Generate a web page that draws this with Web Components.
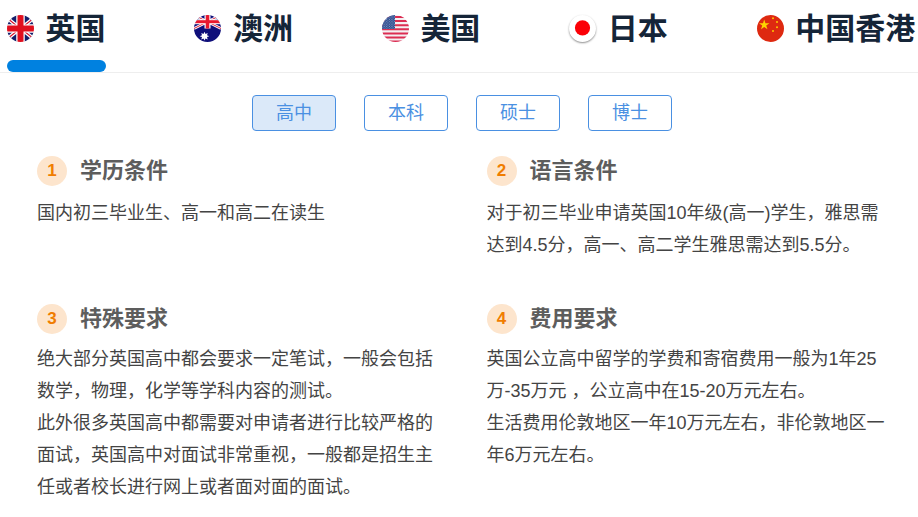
<!DOCTYPE html>
<html lang="zh"><head><meta charset="utf-8"><style>
html,body{margin:0;padding:0;background:#fff;font-family:"Liberation Sans","Noto Sans CJK SC",sans-serif}
body{width:918px;height:517px;overflow:hidden}
</style></head><body>
<study-page></study-page>
<template id="flag-uk"><svg viewBox="0 0 27 27" width="27" height="27"><defs><clipPath id="c"><circle cx="13.5" cy="13.5" r="13.5"/></clipPath></defs><g clip-path="url(#c)"><rect width="27" height="27" fill="#fff"/><path d="M0 0H9.5V9.5H0ZM17.5 0H27V9.5H17.5ZM0 17.5H9.5V27H0ZM17.5 17.5H27V27H17.5Z" fill="#15206b"/><path d="M0 3L10 11M27 3L17 11M0 24L10 16M27 24L17 16" stroke="#fff" stroke-width="3.6"/><path d="M1 3.8L10 11M26 3.8L17 11M1 23.2L10 16M26 23.2L17 16" stroke="#d8142c" stroke-width="1.1"/><rect x="9.5" width="8" height="27" fill="#fff"/><rect y="9.5" width="27" height="8" fill="#fff"/><rect x="10.5" width="6" height="27" fill="#e00f1e"/><rect y="10.5" width="27" height="6" fill="#e00f1e"/></g></svg></template>
<template id="flag-au"><svg viewBox="0 0 27 27" width="27" height="27"><defs><clipPath id="c"><circle cx="13.5" cy="13.5" r="13.5"/></clipPath></defs><g clip-path="url(#c)"><rect width="27" height="27" fill="#0f0f7a"/><path d="M0 0L27 13.5M27 0L0 13.5" stroke="#fff" stroke-width="2.6"/><path d="M0 0L27 13.5M27 0L0 13.5" stroke="#e0203a" stroke-width="1"/><rect x="10.5" width="6" height="13.5" fill="#fff"/><rect y="4.2" width="27" height="5" fill="#fff"/><rect x="11.7" width="3.6" height="13.5" fill="#e8182e"/><rect y="5.2" width="27" height="3" fill="#e8182e"/><path d="M10.5 16.8l1 2.2 2.2-1-.7 2.3 2.3.9-2.3.9.7 2.3-2.2-1-1 2.2-1-2.2-2.2 1 .7-2.3-2.3-.9 2.3-.9-.7-2.3 2.2 1z" fill="#fff"/></g></svg></template>
<template id="flag-us"><svg viewBox="0 0 27 27" width="27" height="27"><defs><clipPath id="c"><circle cx="13.5" cy="13.5" r="13.5"/></clipPath><pattern id="st" width="2.6" height="2.4" patternUnits="userSpaceOnUse"><circle cx=".8" cy=".7" r=".5" fill="#9fb0d6"/><circle cx="2.1" cy="1.9" r=".5" fill="#9fb0d6"/></pattern></defs><g clip-path="url(#c)"><rect width="27" height="27" fill="#f4f0f2"/><path d="M0 1h27v2H0zM0 5.1h27v2H0zM0 9.2h27v2H0zM0 13.3h27v2H0zM0 17.4h27v2H0zM0 21.5h27v2H0zM0 25.6h27v2H0z" fill="#dc2d52"/><rect width="13" height="14" fill="#2c4a8c"/><rect width="13" height="14" fill="url(#st)"/></g></svg></template>
<template id="flag-jp"><svg viewBox="0 0 27 27" width="27" height="27"><circle cx="13.5" cy="13.5" r="12.5" fill="#fff"/><circle cx="13.5" cy="12.8" r="7.6" fill="#fb0006"/></svg></template>
<template id="flag-cn"><svg viewBox="0 0 27 27" width="27" height="27"><circle cx="13.5" cy="13.5" r="13.5" fill="#de2910"/><path d="M7.2 4.4l1.25 3.8h4l-3.25 2.35 1.25 3.8-3.25-2.35L4 14.35l1.25-3.8L2 8.2h4z" fill="#fdd400"/><g fill="#fdc800"><circle cx="16" cy="3.2" r="1"/><circle cx="20" cy="7" r="1"/><circle cx="20" cy="12.3" r="1"/><circle cx="16" cy="16" r="1"/></g></svg></template>
<script>
const F='"Liberation Sans","Noto Sans CJK SC",sans-serif';
class FlagIcon extends HTMLElement{connectedCallback(){const s=this.attachShadow({mode:'open'});const jp=this.getAttribute('name')==='jp';s.innerHTML=`<style>:host{display:block;width:27px;height:27px;border-radius:50%;flex:none;${jp?'box-shadow:0 1px 2px rgba(0,0,0,.45)':''}}svg{display:block}</style>`;s.appendChild(document.getElementById('flag-'+this.getAttribute('name')).content.cloneNode(true));}}
class CountryTab extends HTMLElement{connectedCallback(){const s=this.attachShadow({mode:'open'});s.innerHTML=`<style>:host{display:flex;flex-direction:column;position:relative;height:72px;box-sizing:border-box;padding-top:11px;flex:none;width:187.4px}
.r{display:flex;align-items:flex-start;gap:11.6px;height:36px}
.f{padding-top:4px}
.t{font:700 30px/36px ${F};color:#152538;white-space:nowrap}
.u{position:absolute;left:0;top:60px;width:99px;height:12px;border-radius:6px;background:#0081e0;display:none}
:host([active]) .u{display:block}</style><div class="r"><div class="f"><slot name="flag"></slot></div><span class="t"><slot></slot></span></div><div class="u"></div>`;}}
class LevelBtn extends HTMLElement{connectedCallback(){const s=this.attachShadow({mode:'open'});s.innerHTML=`<style>:host{display:flex;align-items:center;justify-content:center;box-sizing:border-box;width:84px;height:36px;border:1px solid #4a90e2;border-radius:4px;color:#4a90e2;font:400 18px/1 ${F};background:#fff}
:host([active]){background:#dbe9f9}</style><slot></slot>`;}}
class InfoCard extends HTMLElement{connectedCallback(){const s=this.attachShadow({mode:'open'});s.innerHTML=`<style>:host{display:block;box-sizing:border-box}
.h{display:flex;align-items:center;gap:13px;height:30px}
.n{width:30px;height:30px;border-radius:50%;background:#fde5cd;color:#f07d00;font:700 17px/30px "Liberation Sans",sans-serif;text-align:center;flex:none}
.t{font:700 22px/30px ${F};color:#5d5d5d}
.b{margin-top:var(--body-gap,10px);font:400 18px/32px ${F};color:#444}</style>
<div class="h"><span class="n">${this.getAttribute('n')}</span><span class="t">${this.getAttribute('title')}</span></div><div class="b"><slot></slot></div>`;}}
class StudyPage extends HTMLElement{connectedCallback(){const s=this.attachShadow({mode:'open'});s.innerHTML=`<style>:host{display:block;width:918px;height:517px;overflow:hidden}
.tabs{display:flex;padding-left:7px;height:72px;border-bottom:1px solid #eee}
.lv{display:flex;justify-content:center;gap:28px;padding-top:22px;padding-left:6px}
.g{display:grid;grid-template-columns:449.5px 432px;grid-template-rows:148px auto;padding:25px 0 0 37px;}
.a{--body-gap:11px}.c{--body-gap:9px}
</style>
<div class="tabs">
<country-tab active><flag-icon slot="flag" name="uk"></flag-icon>英国</country-tab>
<country-tab><flag-icon slot="flag" name="au"></flag-icon>澳洲</country-tab>
<country-tab><flag-icon slot="flag" name="us"></flag-icon>美国</country-tab>
<country-tab><flag-icon slot="flag" name="jp"></flag-icon>日本</country-tab>
<country-tab><flag-icon slot="flag" name="cn"></flag-icon>中国香港</country-tab>
</div>
<div class="lv"><level-btn active>高中</level-btn><level-btn>本科</level-btn><level-btn>硕士</level-btn><level-btn>博士</level-btn></div>
<div class="g">
<info-card class="a" n="1" title="学历条件">国内初三毕业生、高一和高二在读生</info-card>
<info-card class="a" n="2" title="语言条件">对于初三毕业申请英国10年级(高一)学生，雅思需<br>达到4.5分，高一、高二学生雅思需达到5.5分。</info-card>
<info-card class="c" n="3" title="特殊要求">绝大部分英国高中都会要求一定笔试，一般会包括<br>数学，物理，化学等学科内容的测试。<br>此外很多英国高中都需要对申请者进行比较严格的<br>面试，英国高中对面试非常重视，一般都是招生主<br>任或者校长进行网上或者面对面的面试。</info-card>
<info-card class="c" n="4" title="费用要求">英国公立高中留学的学费和寄宿费用一般为1年25<br>万-35万元 ，公立高中在15-20万元左右。<br>生活费用伦敦地区一年10万元左右，非伦敦地区一<br>年6万元左右。</info-card>
</div>`;}}
customElements.define('flag-icon',FlagIcon);customElements.define('country-tab',CountryTab);customElements.define('level-btn',LevelBtn);customElements.define('info-card',InfoCard);customElements.define('study-page',StudyPage);
</script></body></html>
